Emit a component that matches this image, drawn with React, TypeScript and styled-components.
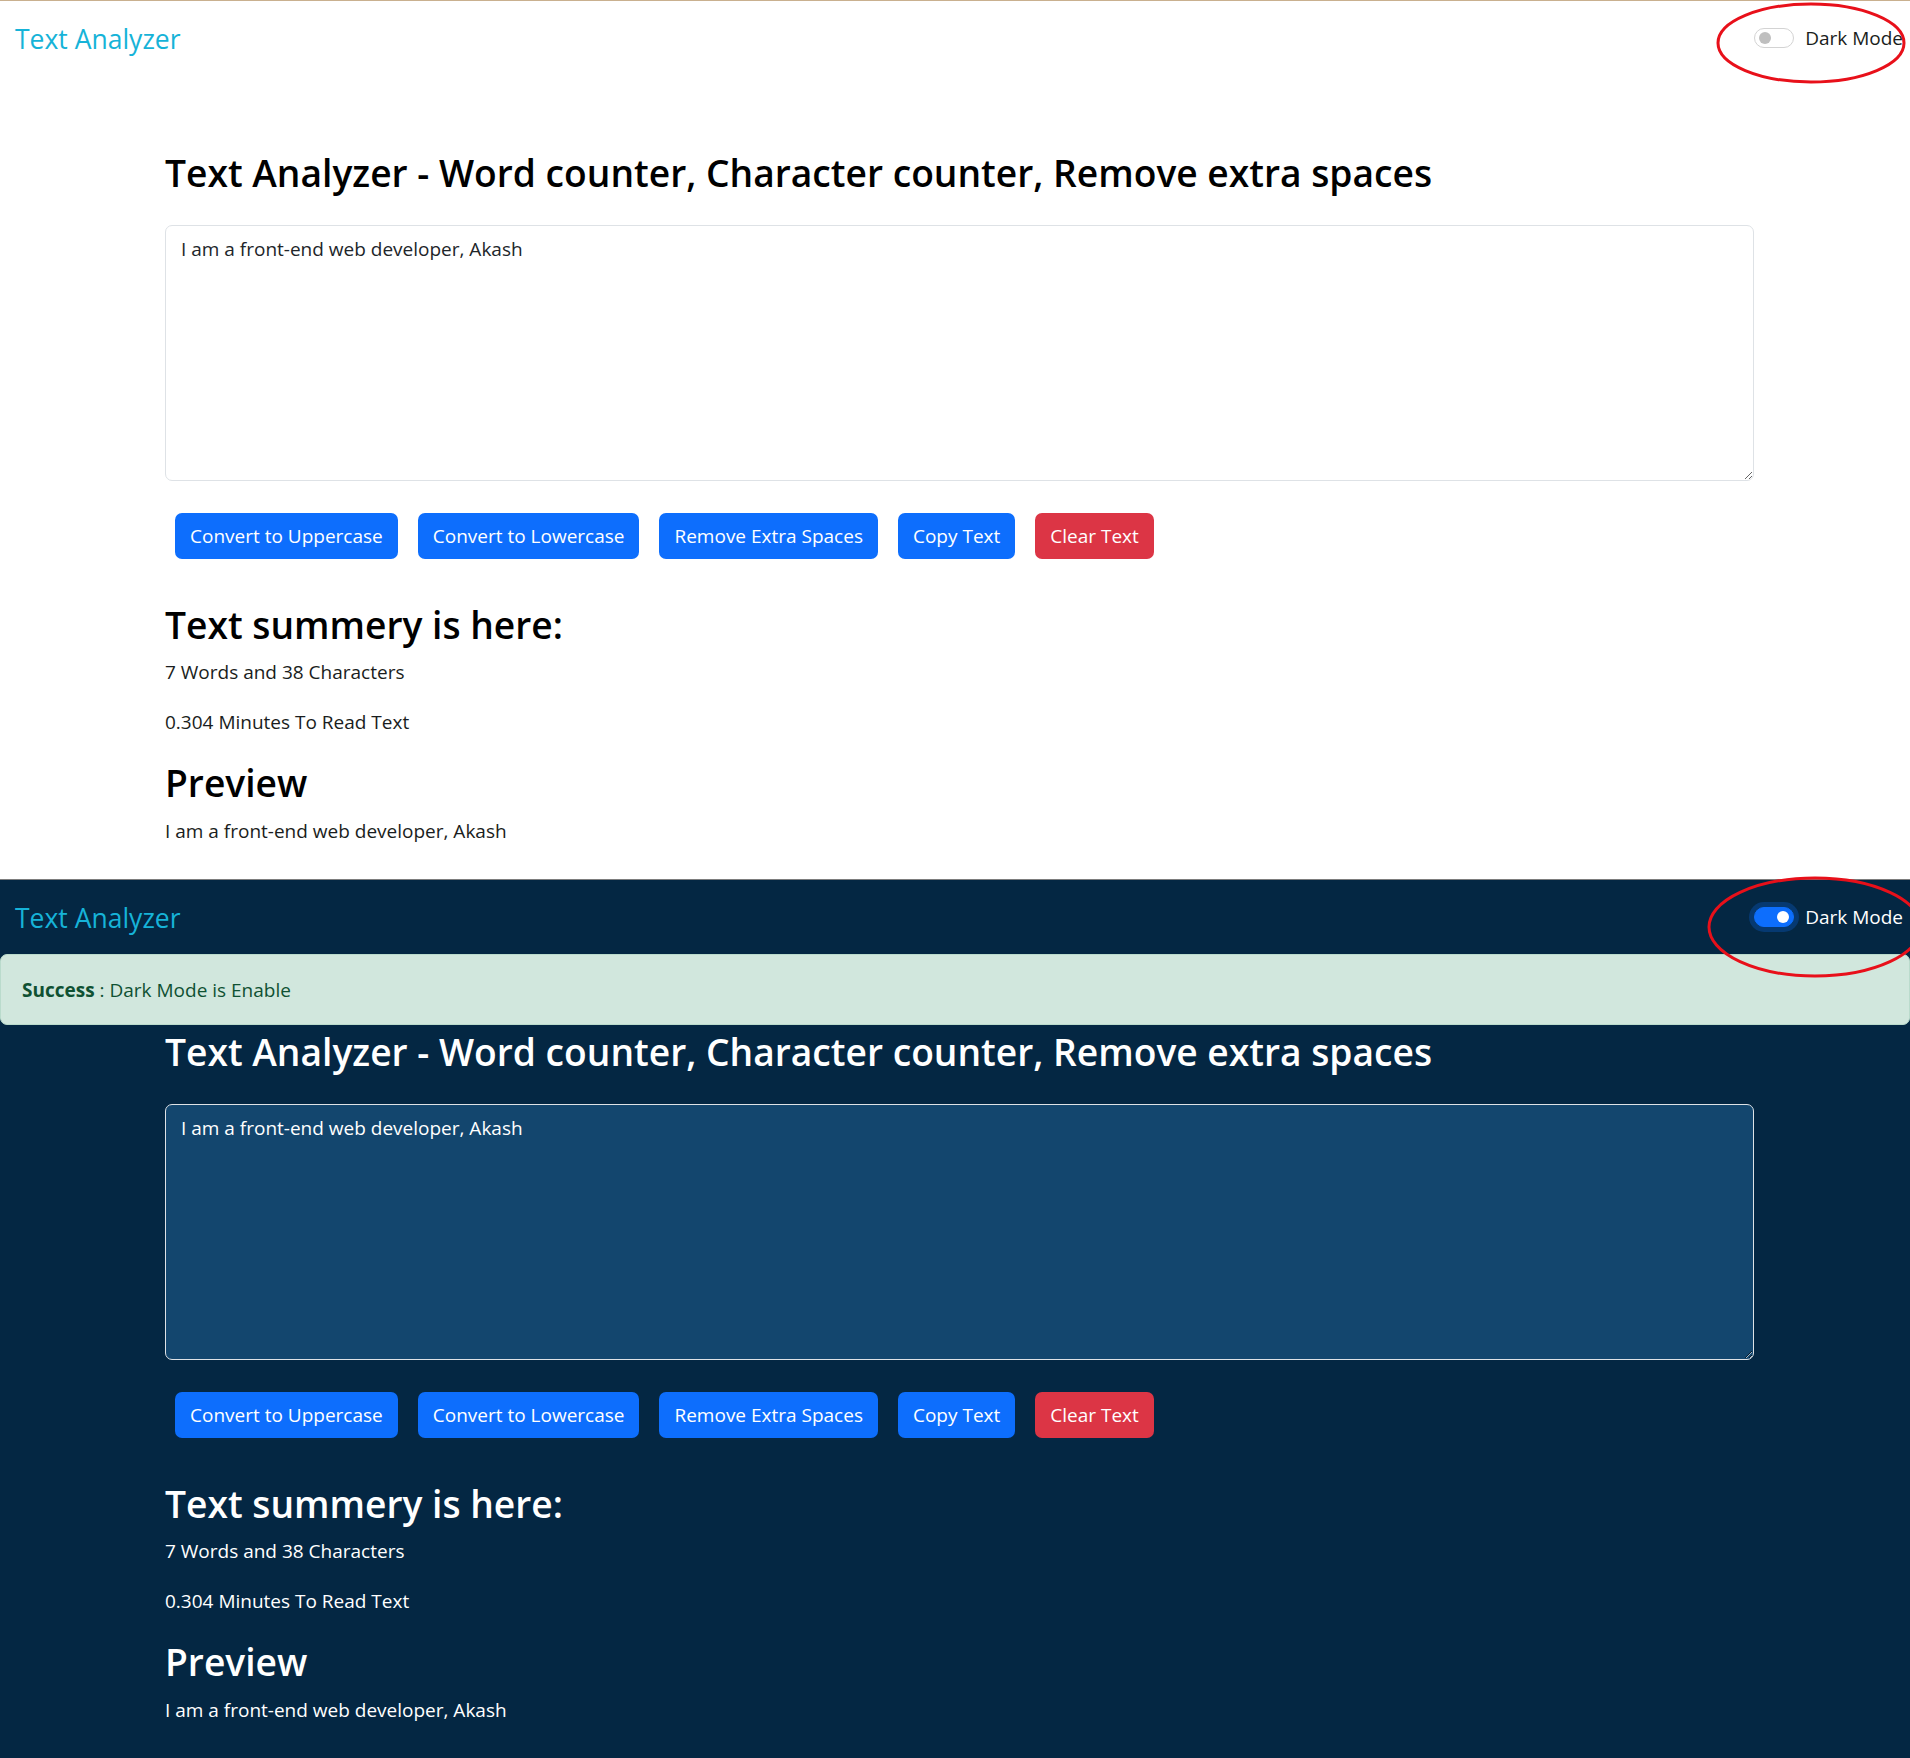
import React from "react";
import styled, { createGlobalStyle } from "styled-components";

const GlobalStyle = createGlobalStyle`
  html, body {
    margin: 0;
    padding: 0;
    overflow-x: hidden;
  }
  body {
    font-family: "Open Sans", "Noto Sans", sans-serif;
    background: #042743;
  }
`;

const Screen = styled.section<{ $dark: boolean }>`
  position: relative;
  overflow-x: clip;
  background: ${(p) => (p.$dark ? "#042743" : "#ffffff")};
  color: ${(p) => (p.$dark ? "#ffffff" : "#1a1d20")};
  border-top: 1px solid ${(p) => (p.$dark ? "#7d7d7d" : "#c9b08f")};
  padding-bottom: 33px;
`;

const Navbar = styled.nav`
  height: 74px;
  display: flex;
  align-items: center;
  justify-content: space-between;
  padding: 0 7px 0 15px;
`;

const Brand = styled.a`
  font-size: 26.5px;
  line-height: 32px;
  color: #16b3d8;
  text-decoration: none;
  margin-top: 2px;
`;

const ModeToggle = styled.label`
  display: flex;
  align-items: center;
  gap: 11px;
  font-size: 19px;
  line-height: 30px;
`;

const Switch = styled.span<{ $on: boolean }>`
  position: relative;
  display: inline-block;
  width: 40px;
  height: 20px;
  box-sizing: border-box;
  border-radius: 10px;
  border: 1px solid ${(p) => (p.$on ? "#0d6efd" : "#d3d3d3")};
  background: ${(p) => (p.$on ? "#0d6efd" : "#ffffff")};
  box-shadow: ${(p) => (p.$on ? "0 0 0 5px rgba(13,110,253,0.25)" : "none")};
  &::after {
    content: "";
    position: absolute;
    top: 3px;
    left: ${(p) => (p.$on ? "22px" : "4px")};
    width: 12px;
    height: 12px;
    border-radius: 50%;
    background: ${(p) => (p.$on ? "#ffffff" : "#bfbfbf")};
  }
`;

const AlertSlot = styled.div`
  height: 71px;
`;

const Alert = styled.div`
  box-sizing: border-box;
  height: 71px;
  padding: 0 21px;
  display: flex;
  align-items: center;
  background: #d1e7dd;
  border: 1px solid #badbcc;
  border-radius: 7px;
  color: #0f5132;
  font-size: 19px;
  strong {
    font-weight: 700;
  }
`;

const Container = styled.main`
  padding: 0 156px 0 165px;
`;

const Heading = styled.h1<{ $gap: number; $dark: boolean }>`
  margin: ${(p) => p.$gap}px 0 0;
  font-size: 37.2px;
  line-height: 48px;
  font-weight: 600;
  color: ${(p) => (p.$dark ? "#ffffff" : "#000000")};
`;

const TextArea = styled.textarea<{ $dark: boolean }>`
  display: block;
  box-sizing: border-box;
  width: 100%;
  height: 256px;
  margin-top: 28px;
  padding: 8px 15px;
  font-family: "Open Sans", "Noto Sans", sans-serif;
  font-size: 19px;
  line-height: 30px;
  border-radius: 7px;
  border: 1px solid #dee2e6;
  background: ${(p) => (p.$dark ? "#13466e" : "#ffffff")};
  color: ${(p) => (p.$dark ? "#ffffff" : "#212529")};
  outline: none;
`;

const ButtonRow = styled.div`
  display: flex;
  gap: 20px;
  margin-top: 32px;
  padding-left: 10px;
`;

const Button = styled.button<{ $variant: "primary" | "danger" }>`
  height: 46px;
  padding: 0 15px;
  border: none;
  border-radius: 7px;
  background: ${(p) => (p.$variant === "danger" ? "#dc3545" : "#0d6efd")};
  color: #ffffff;
  font-family: "Open Sans", "Noto Sans", sans-serif;
  font-size: 19px;
  cursor: pointer;
`;

const Stat = styled.p<{ $gap: number }>`
  margin: ${(p) => p.$gap}px 0 0;
  font-size: 19px;
  line-height: 30px;
`;

const Ellipse = styled.svg<{ $top: number; $height: number }>`
  position: absolute;
  top: ${(p) => p.$top}px;
  right: 0;
  width: 240px;
  height: ${(p) => p.$height}px;
  pointer-events: none;
  overflow: visible;
`;

const TEXT = "I am a front-end web developer, Akash";

function TextUtils({ dark }: { dark: boolean }) {
  return (
    <Screen $dark={dark}>
      <Navbar>
        <Brand href="#">Text Analyzer</Brand>
        <ModeToggle>
          <Switch $on={dark} />
          Dark Mode
        </ModeToggle>
      </Navbar>
      <AlertSlot>
        {dark && (
          <Alert>
            <span>
              <strong>Success</strong> : Dark Mode is Enable
            </span>
          </Alert>
        )}
      </AlertSlot>
      <Container>
        <Heading $gap={3} $dark={dark}>
          Text Analyzer - Word counter, Character counter, Remove extra spaces
        </Heading>
        <TextArea $dark={dark} defaultValue={TEXT} />
        <ButtonRow>
          <Button $variant="primary">Convert to Uppercase</Button>
          <Button $variant="primary">Convert to Lowercase</Button>
          <Button $variant="primary">Remove Extra Spaces</Button>
          <Button $variant="primary">Copy Text</Button>
          <Button $variant="danger">Clear Text</Button>
        </ButtonRow>
        <Heading $gap={42} $dark={dark}>Text summery is here:</Heading>
        <Stat $gap={8}>7 Words and 38 Characters</Stat>
        <Stat $gap={20}>0.304 Minutes To Read Text</Stat>
        <Heading $gap={22} $dark={dark}>Preview</Heading>
        <Stat $gap={9}>{TEXT}</Stat>
      </Container>
      {dark ? (
        <Ellipse $top={-5} $height={104} viewBox="0 0 240 104">
          <ellipse cx="145" cy="52" rx="106" ry="49" fill="none" stroke="#e8101a" strokeWidth="3" />
        </Ellipse>
      ) : (
        <Ellipse $top={1} $height={84} viewBox="0 0 240 84">
          <ellipse cx="141" cy="41" rx="93" ry="39" fill="none" stroke="#e8101a" strokeWidth="3" />
        </Ellipse>
      )}
    </Screen>
  );
}

export default function App() {
  return (
    <>
      <GlobalStyle />
      <TextUtils dark={false} />
      <TextUtils dark={true} />
    </>
  );
}
